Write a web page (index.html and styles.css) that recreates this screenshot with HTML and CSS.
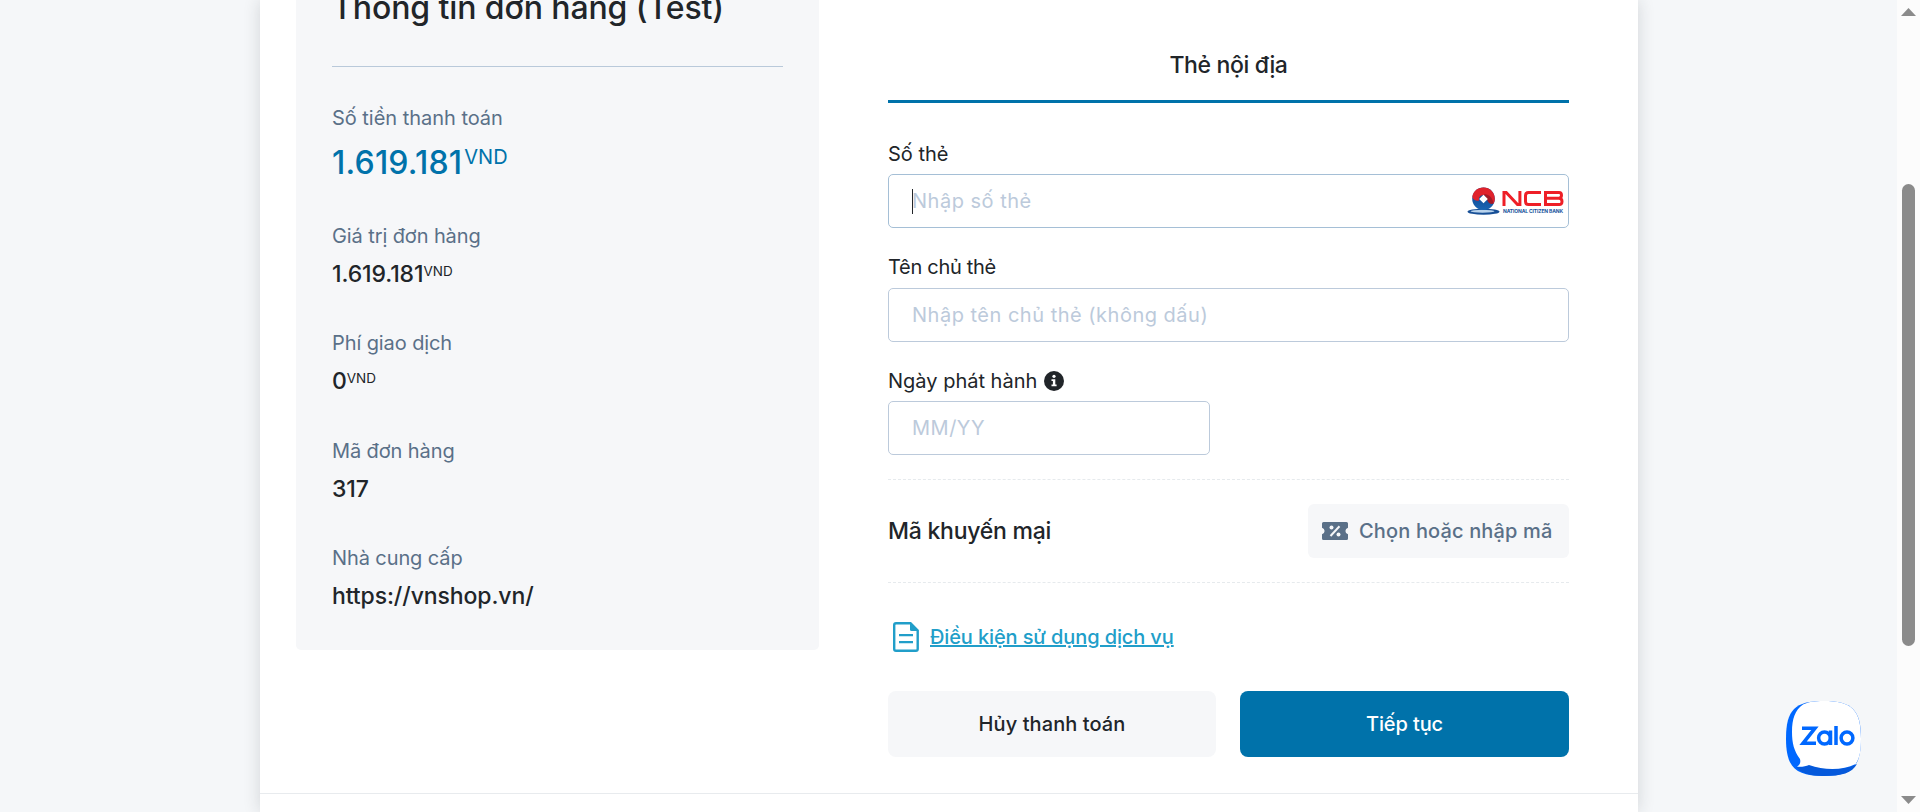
FILE: index.html
```html
<!DOCTYPE html>
<html lang="vi">
<head>
<meta charset="utf-8">
<title>Thanh toán</title>
<link rel="stylesheet" href="styles.css">
</head>
<body>
<div class="viewport">
  <main class="card">
    <div class="columns">
      <section class="order">
        <h1 class="order-title">Thông tin đơn hàng (Test)</h1>
        <dl class="order-list">
          <div class="item item-total"><dt>Số tiền thanh toán</dt><dd>1.619.181<span class="unit">VND</span></dd></div>
          <div class="item"><dt>Giá trị đơn hàng</dt><dd>1.619.181<span class="unit">VND</span></dd></div>
          <div class="item"><dt>Phí giao dịch</dt><dd>0<span class="unit">VND</span></dd></div>
          <div class="item"><dt>Mã đơn hàng</dt><dd>317</dd></div>
          <div class="item"><dt>Nhà cung cấp</dt><dd>https://vnshop.vn/</dd></div>
        </dl>
      </section>
      <section class="payment">
        <div class="tab">Thẻ nội địa</div>
        <div class="field field-number">
          <div class="label">Số thẻ</div>
          <div class="input input-active">
            <span class="caret"></span><span class="placeholder">Nhập số thẻ</span>
            <svg class="bank" viewBox="0 0 97 29" width="97" height="29">
              <defs>
                <linearGradient id="blueBall" x1="0" y1="0" x2="0" y2="1"><stop offset="0" stop-color="#0f3f87"/><stop offset="1" stop-color="#1a66b4"/></linearGradient>
              </defs>
              <ellipse cx="16.500" cy="24.700" rx="16" ry="3" fill="#174f96"/>
              <ellipse cx="15.500" cy="24.200" rx="12" ry="1.500" fill="#b9d3ec"/>
              <circle cx="16.500" cy="11.800" r="11.300" fill="url(#blueBall)"/>
              <path d="M5.300 10C6 4.500 10.500 .5 16.500 .5c6.500 0 11.300 4.900 11.300 11.300 0 2-.5 3.600-1.300 4.900C24.500 12 21 8.500 16.500 8.200c-3.500 0-5 2-4.500 5.300-2.500 1-5.500-.3-6.700-3.500z" fill="#e0222b"/>
              <path d="M17 7c5 0 8.500 3.500 9.500 9.500-2 1.200-4.500.2-6-2.800z" fill="#a31b27"/>
              <path d="M16.500 7.800l4.300 4.200-4.300 4.300-4.300-4.300z" fill="#fff"/>
              <g fill="none" stroke="#ee1f27" stroke-width="3">
                <path d="M37 19V5.500h2.200L50.500 17.500h2.400V4"/>
                <path d="M74 5.500H61.500q-3 0-3 3v6q0 3 3 3H74"/>
                <path d="M78.500 5.500H92q2.500 0 2.500 2.800T92 11.300H80M92 11.300q3 0 3 3.200t-3 3H78.500V4"/>
              </g>
              <text x="36" y="26.400" textLength="60" class="bank-name">NATIONAL CITIZEN BANK</text>
            </svg>
          </div>
        </div>
        <div class="field">
          <div class="label label-name">Tên chủ thẻ</div>
          <div class="input"><span class="placeholder">Nhập tên chủ thẻ (không dấu)</span></div>
        </div>
        <div class="field">
          <div class="label label-date">Ngày phát hành
            <svg viewBox="0 0 20 20" width="20" height="20"><circle cx="10" cy="10" r="10" fill="#212529"/><circle cx="10" cy="5.300" r="1.600" fill="#fff"/><path d="M7.500 8.300h3.800v5.200h1.300v1.800H7.500v-1.800h1.400v-3.400H7.500z" fill="#fff"/></svg>
          </div>
          <div class="input input-short"><span class="placeholder">MM/YY</span></div>
        </div>
        <div class="promo">
          <span class="promo-title">Mã khuyến mại</span>
          <div class="promo-button">
            <svg viewBox="0 0 26 18" width="26" height="18"><path d="M1.500 0h23Q26 0 26 1.500v4.200a3.400 3.400 0 0 0 0 6.600v4.200q0 1.500-1.500 1.500h-23Q0 18 0 16.500v-4.200a3.400 3.400 0 0 0 0-6.600V1.500Q0 0 1.500 0z" fill="#5a7088"/><path d="M8.500 14 17.500 4.200" stroke="#f6f7f9" stroke-width="2"/><circle cx="9.500" cy="5.500" r="2" fill="#f6f7f9"/><circle cx="16.500" cy="12.500" r="2" fill="#f6f7f9"/></svg>
            <span>Chọn hoặc nhập mã</span>
          </div>
        </div>
        <div class="terms">
          <svg viewBox="0 0 26 30" width="26" height="30"><path d="M3 1.200h14.500L24.700 8.500V27q0 1.800-1.800 1.800H3q-1.800 0-1.800-1.800V3Q1.200 1.200 3 1.200z" fill="none" stroke="#219ec9" stroke-width="2.400"/><path d="M17 1v6.500q0 1.500 1.500 1.500H25z" fill="#219ec9"/><path d="M6 13.200h14M6 20.200h14" stroke="#219ec9" stroke-width="2.200"/></svg>
          <a>Điều kiện sử dụng dịch vụ</a>
        </div>
        <div class="actions">
          <div class="button">Hủy thanh toán</div>
          <div class="button button-primary">Tiếp tục</div>
        </div>
      </section>
    </div>
    <div class="footer"></div>
  </main>
  <svg class="zalo" viewBox="0 0 75 75" width="75" height="75">
    <path d="M37.500 0C66 0 75 9 75 37.500S66 75 37.500 75 0 66 0 37.500 9 0 37.500 0z" fill="#0068ff"/>
    <path d="M10 66c8 1 12-2 15-3 15 6 35 6 46 0-5 9-15 12-33.500 12C24 75 15 72 10 66z" fill="#0559db"/>
    <path d="M17 3.500C22 1 28 0 37.500 0 66 0 75 9 75 37.500c0 12-1 19-5.300 25.500-13 6.500-31 6.500-46.700 1-3.500 1.500-7 2-12 1.700 2.500-1.500 4-4 3-7.700C8 50 6 42 6 31 6 18 9 9 17 3.500z" fill="#fff"/>
    <g fill="none" stroke="#0068ff" stroke-width="3.500"><path d="M16 27.200h13L17 42.300h13"/><circle cx="38.500" cy="37" r="5.900"/><path d="M44.500 29.500v14.500M50 25v19"/><circle cx="61" cy="37" r="5.900"/></g>
  </svg>
  <div class="scrollbar">
    <svg class="arrow" viewBox="0 0 15 8" width="15" height="8"><path d="M7.500 0 15 8H0z"/></svg>
    <div class="thumb"></div>
    <svg class="arrow" viewBox="0 0 15 8" width="15" height="8"><path d="M0 0h15L7.500 8z"/></svg>
  </div>
</div>
</body>
</html>
```
FILE: styles.css
```css
* { box-sizing: border-box; }
body {
  margin: 0;
  background: #f5f7f9;
  color: #212529;
  font-family: Inter, "Noto Sans", sans-serif;
  font-size: 20px;
}
.viewport {
  position: relative;
  display: flex;
  width: 1920px;
  height: 812px;
  overflow: hidden;
}
.card {
  width: 1378px;
  margin-left: 260px;
  background: #fff;
  box-shadow: 0 0 16px rgba(33, 37, 41, .16);
}
.columns {
  display: flex;
  align-items: flex-start;
  gap: 69px;
  height: 793px;
  padding: 0 69px 0 36px;
}
.order {
  width: 523px;
  height: 650px;
  padding: 0 36px;
  background: #f6f7f9;
  border-radius: 0 0 5px 5px;
}
.order-title {
  height: 79px;
  margin: -12px 0 36px;
  border-bottom: 1px solid #b9c9da;
  font-size: 32px;
  line-height: 40px;
  font-weight: 500;
  letter-spacing: -.1px;
}
.order-list { margin: 0; }
.item { margin-bottom: 39.5px; }
.item dt {
  margin-bottom: 8px;
  color: #5a7088;
  line-height: 30px;
  letter-spacing: -.1px;
}
.item dd {
  display: flex;
  align-items: flex-start;
  margin: 0;
  font-size: 23px;
  line-height: 30px;
  font-weight: 500;
  letter-spacing: -.1px;
}
.unit { font-size: 13.5px; line-height: 24px; font-weight: 400; letter-spacing: 0; }
.item-total { margin-bottom: 37.5px; }
.item-total dt { margin-bottom: 10px; letter-spacing: -.03px; }
.item-total dd { color: #0072aa; font-size: 32px; line-height: 40px; letter-spacing: .2px; }
.item-total .unit { margin-left: 2px; font-size: 20px; line-height: 28px; letter-spacing: 0; }
.payment { width: 681px; }
.tab {
  height: 103px;
  padding-top: 50px;
  border-bottom: 3px solid #0072aa;
  font-size: 23px;
  line-height: 30px;
  font-weight: 500;
  letter-spacing: -.35px;
  text-align: center;
  margin-bottom: 36px;
}
.label {
  display: flex;
  align-items: center;
  height: 30px;
  line-height: 30px;
  margin-bottom: 5px;
}
.label-name { padding-bottom: 2px; letter-spacing: -.3px; }
.label-date { gap: 7px; }
.field { margin-bottom: 24px; }
.field-number { margin-bottom: 25px; }
.input {
  display: flex;
  align-items: center;
  height: 54px;
  padding: 0 4px 0 23px;
  border: 1px solid #bccadb;
  border-radius: 5px;
}
.input-active { border-color: #a5bfd6; }
.input-short { width: 322px; }
.caret { width: 1px; height: 25px; margin-right: -1px; background: #212529; }
.placeholder { color: #bccadb; letter-spacing: .5px; }
.bank { margin-left: auto; }
.bank-name { fill: #17529c; font-size: 5px; font-weight: 700; }
.promo {
  display: flex;
  align-items: center;
  justify-content: space-between;
  height: 104px;
  border-top: 1px dashed #e6eaed;
  border-bottom: 1px dashed #e6eaed;
}
.promo-title { font-size: 23px; font-weight: 500; letter-spacing: -.25px; }
.promo-button {
  display: flex;
  align-items: center;
  gap: 11px;
  width: 261px;
  height: 54px;
  padding-left: 14px;
  border-radius: 6px;
  background: #f6f7f9;
  color: #5a7088;
  font-weight: 500;
  letter-spacing: .15px;
  white-space: nowrap;
}
.terms {
  display: flex;
  align-items: center;
  gap: 11px;
  height: 30px;
  margin: 39px 0 39px 5px;
  color: #219ec9;
  font-weight: 500;
  letter-spacing: -.12px;
}
.terms a { text-decoration: underline; text-decoration-thickness: 2px; }
.actions { display: grid; grid-template-columns: 328px 1fr; gap: 24px; }
.button {
  height: 66px;
  padding-top: 18px;
  border-radius: 8px;
  background: #f6f7f9;
  font-weight: 500;
  line-height: 30px;
  letter-spacing: .08px;
  text-align: center;
}
.button-primary { background: #0072aa; color: #fff; letter-spacing: -.1px; }
.footer { height: 19px; border-top: 1px solid #e8ebee; }
.zalo { position: absolute; left: 1786px; top: 701px; }
.scrollbar {
  display: flex;
  flex-direction: column;
  align-items: center;
  width: 23px;
  height: 812px;
  margin-left: auto;
  padding: 8px 0;
  background: #fcfcfc;
}
.arrow { fill: #8b8b8b; }
.thumb { width: 13px; height: 462px; margin: 168px 0 150px; border-radius: 7px; background: #8b8b8b; }
```
